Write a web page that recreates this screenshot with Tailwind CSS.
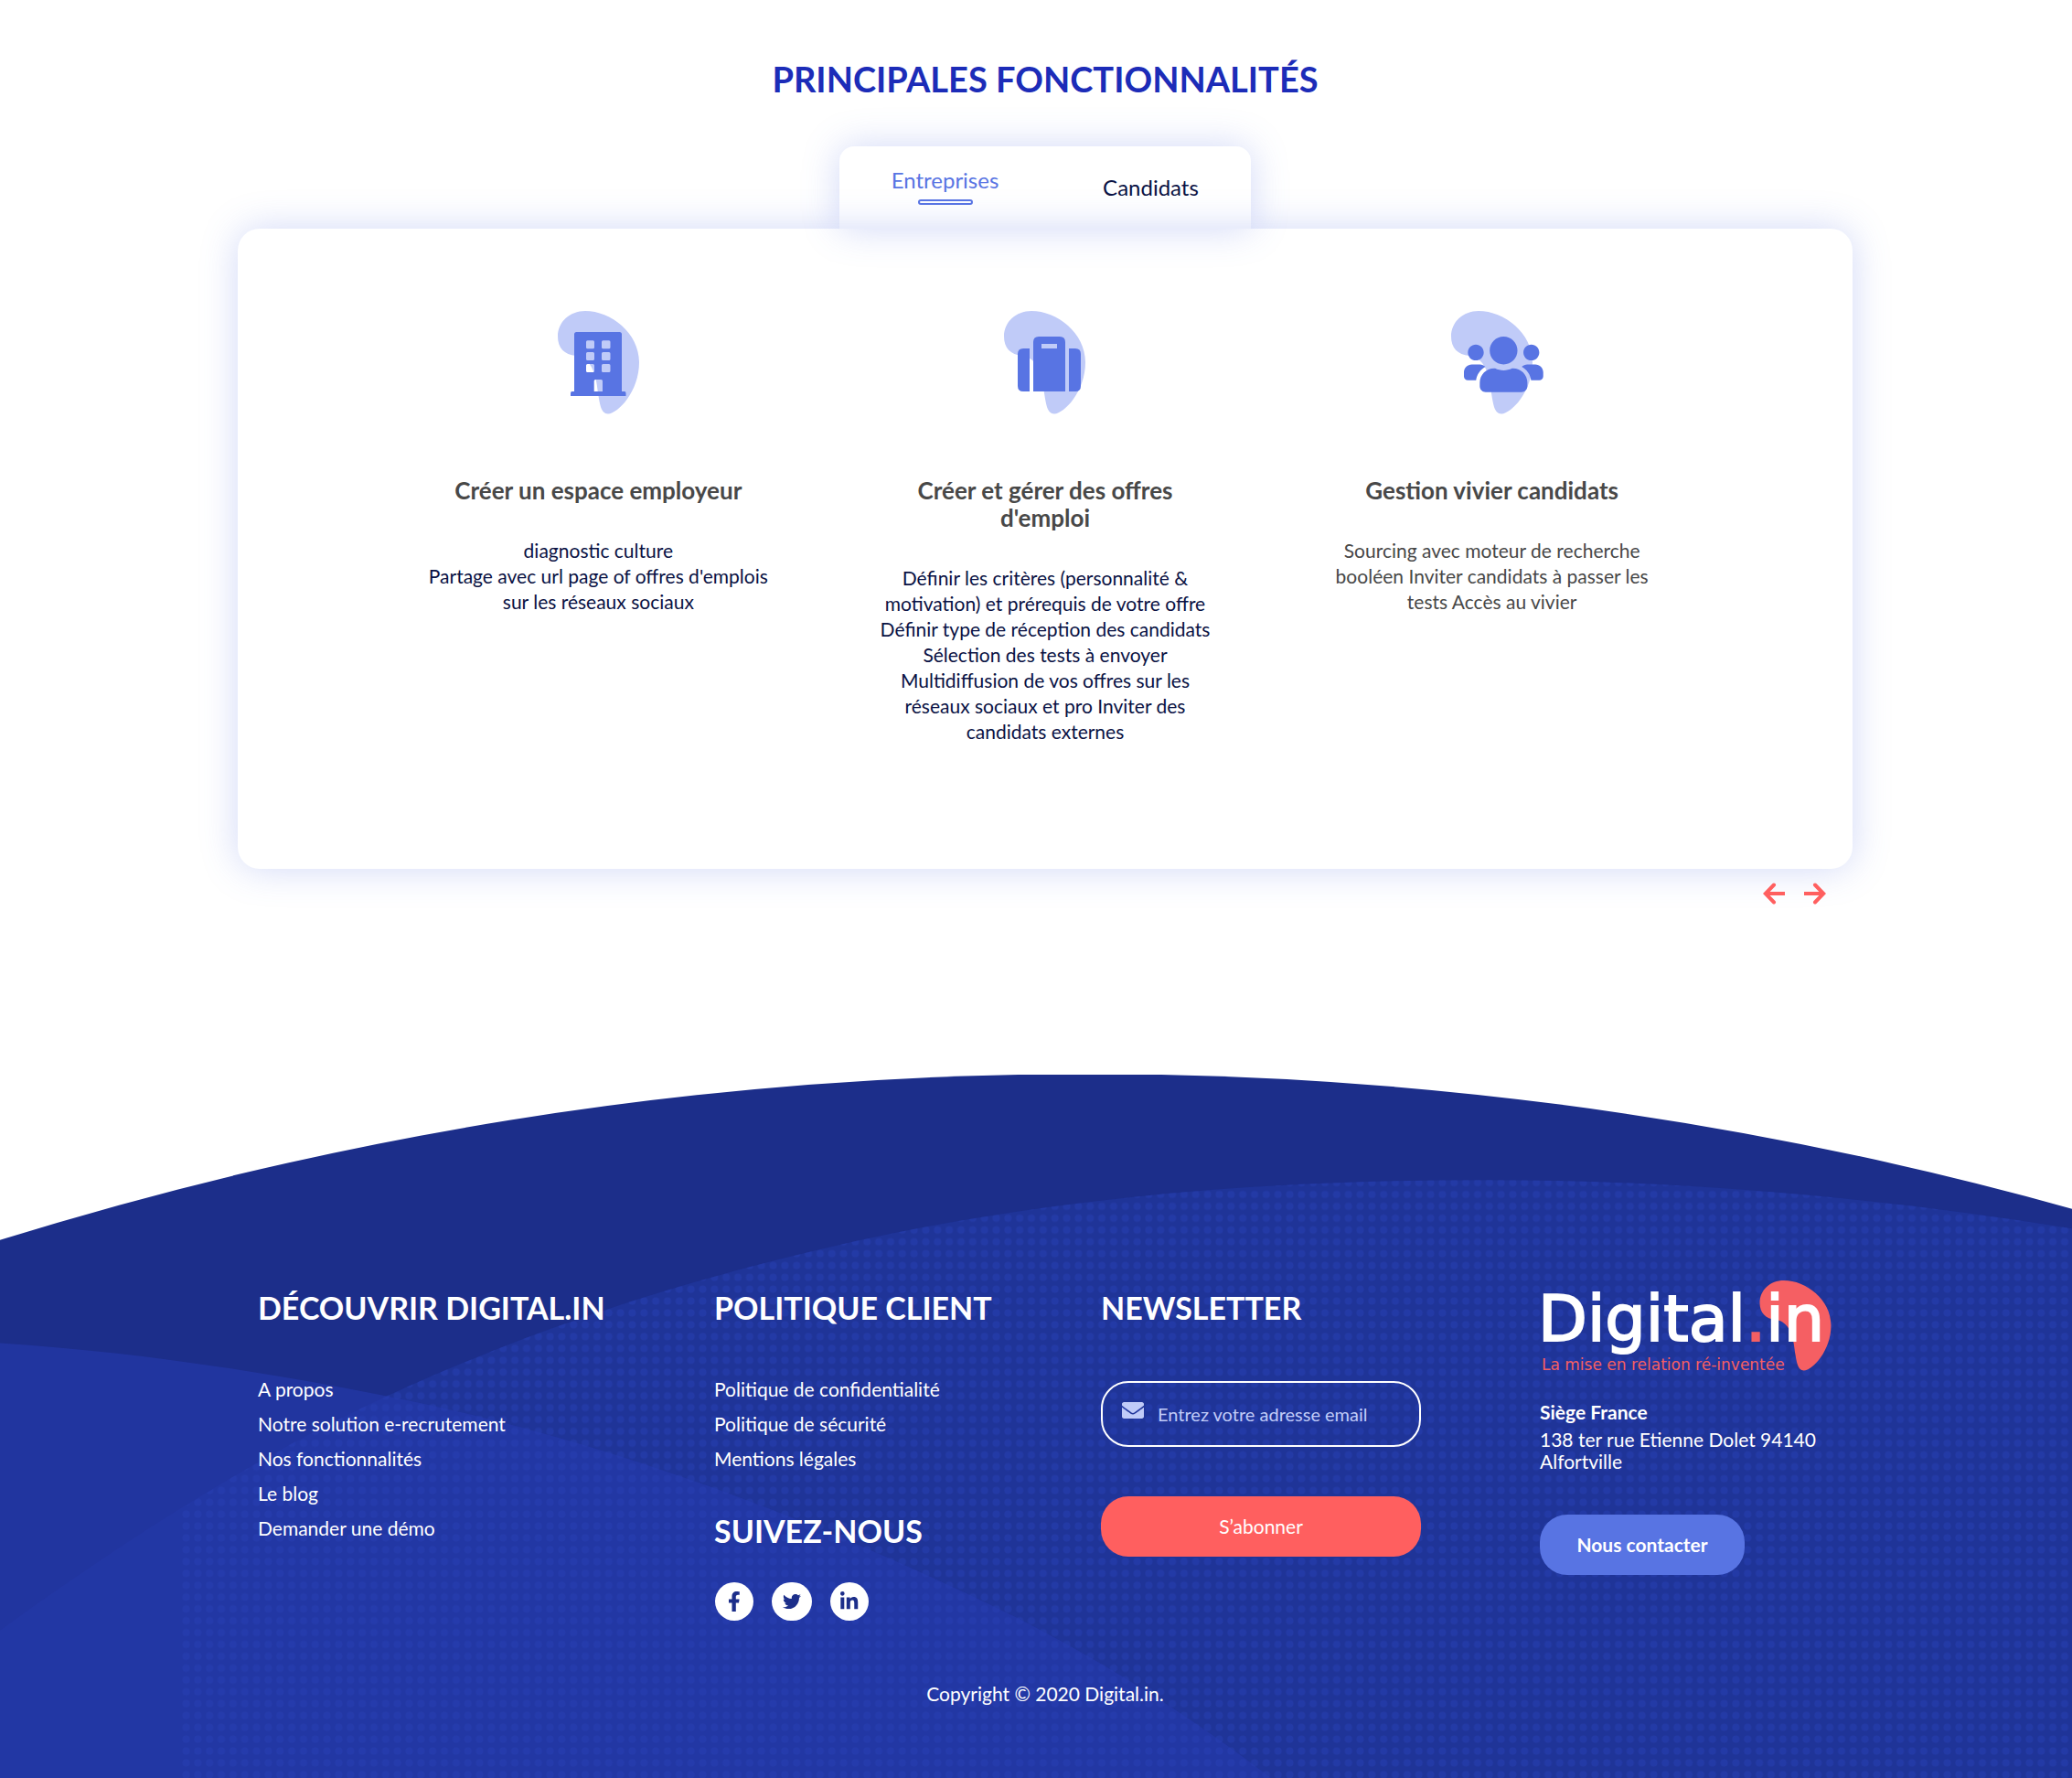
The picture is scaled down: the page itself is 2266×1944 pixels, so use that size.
<!DOCTYPE html>
<html lang="fr">
<head>
<meta charset="utf-8">
<meta name="viewport" content="width=device-width, initial-scale=1">
<title>Digital.in – Principales fonctionnalités</title>
<script src="https://cdn.jsdelivr.net/npm/@tailwindcss/browser@4"></script>
</head>
<body class="flex min-h-screen flex-col bg-white font-['Lato','Noto_Sans',sans-serif] text-[#0a1244]">
<svg class="hidden" aria-hidden="true">
  <symbol id="blob" viewBox="0 0 89 113"><path d="M30 0C58 0 89 24 89 56C89 88 66 112 55 112.500C47 112.500 46 101 44 90C42 68 36 51 20 49C7 48 0 40 0 28C0 12 13 0 30 0Z"/></symbol>
</svg>

<main class="pl-5">
  <section class="mx-auto max-w-[1766px] pt-[61px]">
    <h1 class="text-center text-[38px] font-bold leading-[50px] text-[#1c2cb8]">PRINCIPALES FONCTIONNALITÉS</h1>

    <div role="tablist" class="mx-auto mt-[49px] grid h-[90px] w-[450px] grid-cols-2 rounded-t-2xl pl-1 text-2xl leading-8 shadow-[0_0_40px_rgba(88,116,227,0.28)]">
      <button role="tab" aria-selected="true" class="flex flex-col items-center pt-[21px] text-[#5874e3]">Entreprises<span class="mt-[5px] h-1.5 w-[60px] rounded-sm border-2 border-[#5874e3]"></span></button>
      <button role="tab" aria-selected="false" class="flex flex-col items-center pl-1 pt-[29px]">Candidats</button>
    </div>

    <div class="grid h-[700px] grid-cols-3 rounded-3xl px-[150px] pt-[90px] text-center shadow-[0_0_40px_rgba(88,116,227,0.28)]">
      <article class="flex flex-col items-center">
        <svg class="h-[113px] w-[89px] overflow-visible" viewBox="0 0 89 113">
          <use href="#blob" width="89" height="113" fill="#c0cbf8"/>
          <path fill="#5874e3" fill-rule="evenodd" d="M20.500 23H67.500Q70 23 70 25.500V88H73Q74.500 88 74.500 90V93H14V90Q14 88 15.500 88H18V25.500Q18 23 20.500 23ZM32 32.200h6.500q1.500 0 1.500 1.500v6q0 1.500-1.500 1.500h-6q-1.500 0-1.500-1.500v-6q0-1.500 1.500-1.500ZM49.500 32.200h6.500q1.500 0 1.500 1.500v6q0 1.500-1.500 1.500h-6.500q-1.500 0-1.500-1.500v-6q0-1.500 1.500-1.500ZM32 45h6.500q1.500 0 1.500 1.500v6q0 1.500-1.500 1.500h-6q-1.500 0-1.500-1.500v-6q0-1.500 1.500-1.500ZM49.500 45h6.500q1.500 0 1.500 1.500v6q0 1.500-1.500 1.500h-6.500q-1.500 0-1.500-1.500v-6q0-1.500 1.500-1.500ZM32 58h6.500q1.500 0 1.500 1.500v6q0 1.500-1.500 1.500h-6q-1.500 0-1.500-1.500v-6q0-1.500 1.500-1.500ZM49.500 58h6.500q1.500 0 1.500 1.500v6q0 1.500-1.500 1.500h-6.500q-1.500 0-1.500-1.500v-6q0-1.500 1.500-1.500ZM41 75h6.500q1.500 0 1.500 1.500V88H39.700V76.500q0-1.500 1.500-1.500Z"/>
        </svg>
        <h2 class="mt-[68px] text-[26px] font-bold leading-[30px] text-[#484848]">Créer un espace employeur</h2>
        <p class="mt-[37px] text-[21px] leading-7">diagnostic culture<br>Partage avec url page of offres d'emplois<br>sur les réseaux sociaux</p>
      </article>
      <article class="flex flex-col items-center">
        <svg class="h-[113px] w-[89px] overflow-visible" viewBox="0 0 89 113">
          <use href="#blob" width="89" height="113" fill="#c0cbf8"/>
          <path fill="#5874e3" fill-rule="evenodd" d="M15 47Q15 41 21 41H28V88H21Q15 88 15 82ZM71 41H78Q84 41 84 47V82Q84 88 78 88H71ZM32 34Q32 28 38 28H61Q67 28 67 34V88H32ZM41 36V41H58V36Z"/>
        </svg>
        <h2 class="mt-[68px] text-[26px] font-bold leading-[30px] text-[#484848]">Créer et gérer des offres<br>d'emploi</h2>
        <p class="mt-[37px] text-[21px] leading-7">Définir les critères (personnalité &amp;<br>motivation) et prérequis de votre offre<br>Définir type de réception des candidats<br>Sélection des tests à envoyer<br>Multidiffusion de vos offres sur les<br>réseaux sociaux et pro Inviter des<br>candidats externes</p>
      </article>
      <article class="flex flex-col items-center">
        <svg class="h-[113px] w-[89px] overflow-visible" viewBox="0 0 89 113">
          <use href="#blob" width="89" height="113" fill="#c0cbf8"/>
          <g fill="#5874e3" transform="translate(14 23.700) scale(.13550)">
            <path d="M96 224c35.300 0 64-28.700 64-64s-28.700-64-64-64-64 28.700-64 64 28.700 64 64 64zm448 0c35.300 0 64-28.700 64-64s-28.700-64-64-64-64 28.700-64 64 28.700 64 64 64zm32 32h-64c-17.600 0-33.500 7.100-45.100 18.600 40.300 22.100 68.900 62 75.100 109.400h66c17.700 0 32-14.300 32-32v-32c0-35.300-28.700-64-64-64zm-256 0c61.900 0 112-50.100 112-112S381.900 32 320 32 208 82.100 208 144s50.100 112 112 112zm76.800 32h-8.300c-20.800 10-43.900 16-68.500 16s-47.600-6-68.500-16h-8.300C179.600 288 128 339.600 128 403.200V432c0 26.500 21.500 48 48 48h288c26.500 0 48-21.500 48-48v-28.800c0-63.600-51.600-115.200-115.200-115.200zm-223.700-13.400C161.500 263.100 145.600 256 128 256H64c-35.300 0-64 28.700-64 64v32c0 17.700 14.300 32 32 32h65.900c6.300-47.400 34.900-87.300 75.200-109.400z"/>
          </g>
        </svg>
        <h2 class="mt-[68px] text-[26px] font-bold leading-[30px] text-[#484848]">Gestion vivier candidats</h2>
        <p class="mt-[37px] text-[21px] leading-7 text-[#484848]">Sourcing avec moteur de recherche<br>booléen Inviter candidats à passer les<br>tests Accès au vivier</p>
      </article>
    </div>

    <div class="mt-[15px] flex justify-end gap-[21px] pr-[29px] text-[#ff5f5f]">
      <button aria-label="Précédent"><svg class="size-6" viewBox="0 0 24 24" fill="none" stroke="currentColor" stroke-width="4" stroke-linejoin="miter"><path stroke-linecap="round" d="M12 2.500 2.800 12 12 21.500"/><path d="M3 12H24"/></svg></button>
      <button aria-label="Suivant"><svg class="size-6" viewBox="0 0 24 24" fill="none" stroke="currentColor" stroke-width="4" stroke-linejoin="miter"><path stroke-linecap="round" d="M12 2.500 21.200 12 12 21.500"/><path d="M21 12H0"/></svg></button>
    </div>
  </section>
</main>

<footer class="relative mt-[186px] flex-1 pb-[73px] pl-5 pt-[225px] text-white">
  <svg class="absolute inset-0 size-full" viewBox="0 0 2266 768" preserveAspectRatio="none" aria-hidden="true">
    <defs>
      <pattern id="dots" x="531" y="8" width="12.840" height="12.930" patternUnits="userSpaceOnUse"><circle cx="6.400" cy="6.400" r="4" fill="#2740b4" fill-opacity=".5"/></pattern>
      <clipPath id="hill"><path d="M0 180.600A4000 4000 0 0 1 2266 146.500V768H0Z"/></clipPath>
    </defs>
    <g clip-path="url(#hill)">
      <path fill="#1c2e8a" d="M0 0H2266V768H0Z"/>
      <path fill="#1f3498" d="M0 607C141 505 282 416 423 351C595 272 767 219 939 181C1168 131 1397 115 1626 115C1839 115 2053 134 2266 168V768H0Z"/>
      <path fill="#2539aa" fill-opacity=".65" d="M0 293C141 302 282 323 423 351C652 396 881 480 1110 592C1203 639 1297 697 1390 768H0Z"/>
      <path fill="url(#dots)" d="M196 476C282 420 350 385 423 351C595 272 767 219 939 181C1168 131 1397 115 1626 115C1839 115 2053 134 2266 168V768H196Z"/>
    </g>
  </svg>

  <div class="relative mx-auto max-w-[1766px] px-[22px]">
    <div class="grid grid-cols-[499fr_423fr_480fr_320fr]">
      <nav aria-labelledby="f1">
        <h2 id="f1" class="mt-2 text-[34px] font-bold leading-11">DÉCOUVRIR DIGITAL.IN</h2>
        <ul class="mt-12 text-[21px] leading-[38px]">
          <li><a href="#">A propos</a></li>
          <li><a href="#">Notre solution e-recrutement</a></li>
          <li><a href="#">Nos fonctionnalités</a></li>
          <li><a href="#">Le blog</a></li>
          <li><a href="#">Demander une démo</a></li>
        </ul>
      </nav>
      <div>
        <h2 class="mt-2 text-[34px] font-bold leading-11">POLITIQUE CLIENT</h2>
        <ul class="mt-12 text-[21px] leading-[38px]">
          <li><a href="#">Politique de confidentialité</a></li>
          <li><a href="#">Politique de sécurité</a></li>
          <li><a href="#">Mentions légales</a></li>
        </ul>
        <h2 class="mt-[38px] text-[34px] font-bold leading-11">SUIVEZ-NOUS</h2>
        <div class="mt-[34px] flex gap-5 pl-px text-[#1c2e8a]">
          <a href="#" aria-label="Facebook" class="flex h-[42px] w-[42px] items-center justify-center rounded-full bg-white"><svg class="h-[22px]" viewBox="0 0 320 512" fill="currentColor"><path d="M279.140 288l14.220-92.660h-88.910v-60.130c0-25.350 12.420-50.060 52.240-50.060h40.420V6.260S260.430 0 225.360 0c-73.220 0-121.080 44.380-121.080 124.720v70.620H22.890V288h81.390v224h100.170V288z"/></svg></a>
          <a href="#" aria-label="Twitter" class="flex h-[42px] w-[44px] items-center justify-center rounded-full bg-white"><svg class="h-5" viewBox="0 0 512 512" fill="currentColor"><path d="M459.370 151.716c.325 4.548.325 9.097.325 13.645 0 138.720-105.583 298.558-298.558 298.558-59.452 0-114.680-17.219-161.137-47.106 8.447.974 16.568 1.299 25.340 1.299 49.055 0 94.213-16.568 130.274-44.832-46.132-.975-84.792-31.188-98.112-72.772 6.498.974 12.995 1.624 19.818 1.624 9.421 0 18.843-1.300 27.614-3.573-48.081-9.747-84.143-51.980-84.143-102.985v-1.299c13.969 7.797 30.214 12.670 47.431 13.319-28.264-18.843-46.781-51.005-46.781-87.391 0-19.492 5.197-37.360 14.294-52.954 51.655 63.675 129.300 105.258 216.365 109.807-1.624-7.797-2.599-15.918-2.599-24.040 0-57.828 46.782-104.934 104.934-104.934 30.213 0 57.502 12.670 76.670 33.137 23.715-4.548 46.456-13.320 66.599-25.340-7.798 24.366-24.366 44.833-46.132 57.827 21.117-2.273 41.584-8.122 60.426-16.243-14.292 20.791-32.161 39.308-52.628 54.253z"/></svg></a>
          <a href="#" aria-label="LinkedIn" class="flex h-[42px] w-[42px] items-center justify-center rounded-full bg-white"><svg class="h-[22px]" viewBox="0 0 448 512" fill="currentColor"><path d="M100.280 448H7.400V148.900h92.880zM53.790 108.100C24.090 108.100 0 83.500 0 53.800a53.790 53.790 0 0 1 107.580 0c0 29.700-24.100 54.300-53.790 54.300zM447.900 448h-92.680V302.400c0-34.700-.7-79.200-48.290-79.200-48.290 0-55.690 37.700-55.690 76.700V448h-92.780V148.900h89.080v40.800h1.300c12.400-23.500 42.690-48.300 87.880-48.300 94 0 111.280 61.900 111.280 142.300V448z"/></svg></a>
        </div>
      </div>
      <form class="w-[350px]">
        <h2 class="mt-2 text-[34px] font-bold leading-11">NEWSLETTER</h2>
        <label class="mt-[58px] flex h-[72px] items-center gap-[15px] rounded-[30px] border-2 border-white pl-[21px] pr-4">
          <svg class="mb-2 h-[18px] w-6 shrink-0" viewBox="0 64 512 384" fill="#c0cbf8" role="img" aria-label="Adresse email"><path d="M502.300 190.800c3.900-3.100 9.700-.2 9.700 4.700V400c0 26.500-21.500 48-48 48H48c-26.500 0-48-21.500-48-48V195.600c0-5 5.700-7.800 9.700-4.700 22.400 17.400 52.100 39.500 154.100 113.600 21.100 15.400 56.700 47.800 92.200 47.600 35.700.3 72-32.800 92.300-47.600 102-74.100 131.600-96.300 154-113.700zM256 320c23.200.4 56.600-29.200 73.400-41.400 132.700-96.300 142.800-104.700 173.400-128.700 5.800-4.500 9.200-11.500 9.200-18.900v-19c0-26.500-21.500-48-48-48H48c-26.500 0-48 21.500-48 48v19c0 7.400 3.400 14.300 9.200 18.900 30.600 23.900 40.700 32.400 173.400 128.700 16.800 12.200 50.200 41.800 73.400 41.400z"/></svg>
          <input type="email" placeholder="Entrez votre adresse email" class="min-w-0 flex-1 bg-transparent text-xl leading-7 outline-none placeholder:text-[#c0cbf8]">
        </label>
        <button type="button" class="mt-[54px] h-[66px] w-full rounded-[30px] bg-[#ff5f5f] text-[21px]">S’abonner</button>
      </form>
      <div>
        <div class="h-[100px] w-[320px]">
          <svg class="size-full overflow-visible" viewBox="0 0 320 100" role="img" aria-label="Digital.in, La mise en relation ré-inventée">
            <use href="#blob" x="240" y="0" width="79" height="99" fill="#f55f63"/>
            <g font-family="DejaVu Sans, sans-serif">
              <text x="-2" y="66" font-size="70" fill="#fff" stroke="#fff" stroke-width="2">Digital<tspan fill="#f55f63" stroke="#f55f63">.</tspan>in</text>
              <text x="2" y="98" font-size="17" fill="#f55f63">La mise en relation ré-inventée</text>
            </g>
          </svg>
        </div>
        <p class="mt-[30px] text-[21px] font-bold leading-7">Siège France</p>
        <address class="mt-1 text-[21px] not-italic leading-6">138 ter rue Etienne Dolet 94140<br>Alfortville</address>
        <button type="button" class="mt-[46px] h-[66px] w-56 rounded-[30px] bg-[#5874e3] text-[21px] font-bold">Nous contacter</button>
      </div>
    </div>
    <p class="mt-[66px] text-center text-[21px] leading-7">Copyright © 2020 Digital.in.</p>
  </div>
</footer>
</body>
</html>
